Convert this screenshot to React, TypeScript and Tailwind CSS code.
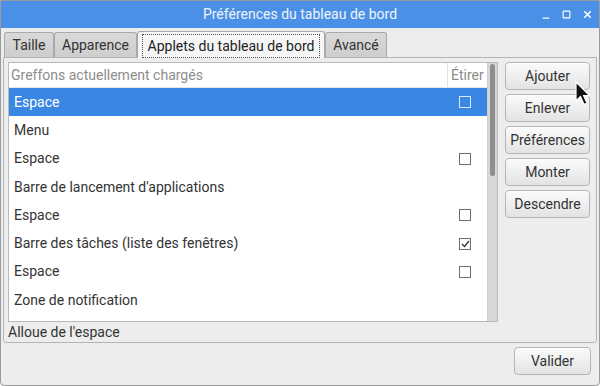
import { Minus, Square, X } from 'lucide-react'

const rows: { label: string; box?: 'off' | 'on' }[] = [
  { label: 'Espace', box: 'off' },
  { label: 'Menu' },
  { label: 'Espace', box: 'off' },
  { label: "Barre de lancement d'applications" },
  { label: 'Espace', box: 'off' },
  { label: 'Barre des tâches (liste des fenêtres)', box: 'on' },
  { label: 'Espace', box: 'off' },
  { label: 'Zone de notification' },
]

const sideButtons = ['Ajouter', 'Enlever', 'Préférences', 'Monter', 'Descendre']

export default function App() {
  return (
    <div
      className="w-[600px] h-[386px] flex flex-col bg-[#ededed] border border-[#9a9a9a] rounded-b-[4px] overflow-hidden text-[#333] relative"
      style={{ fontFamily: 'Roboto, "Liberation Sans", sans-serif' }}
    >
      {/* Title bar */}
      <div className="h-[27px] shrink-0 bg-[#4a90e6] flex items-center relative">
        <span className="flex-1 text-center text-[14px] text-[#eef4fd]">Préférences du tableau de bord</span>
        <div className="absolute right-[6px] top-0 h-full flex items-center gap-[11px] text-white">
          <Minus size={10} strokeWidth={3} className="mt-[6px]" />
          <Square size={9} strokeWidth={3} />
          <X size={11} strokeWidth={3.5} />
        </div>
      </div>

      {/* Tabs */}
      <div className="h-[29px] shrink-0 flex items-end px-[3px]">
        <Tab label="Taille" w="w-[50px]" />
        <Tab label="Apparence" w="w-[83px]" />
        <div className="w-[188px] h-[27px] mb-[-1px] relative z-10 bg-[#f6f6f6] border border-b-0 border-[#a9a9a9] rounded-t-[3px] flex items-start justify-center px-[4px] pt-[2px]">
          <span className="border border-dotted border-[#555] leading-[22px] text-[14px] text-[#222] w-full text-center">
            Applets du tableau de bord
          </span>
        </div>
        <Tab label="Avancé" w="w-[62px]" />
      </div>

      {/* Notebook page */}
      <div className="mx-[2px] h-[286px] shrink-0 border border-[#b4b4b4] rounded-b-[3px] bg-[#ededed] flex flex-col px-[4px] pt-[4px]">
        <div className="flex gap-[7px]">
          {/* List frame */}
          <div className="w-[490px] h-[260px] border border-[#b9b9b9] bg-white flex overflow-hidden">
            <div className="flex-1 flex flex-col">
              <div className="h-[25px] shrink-0 flex items-center text-[14px] text-[#8c8c8c] border-b border-[#e6e6e6]">
                <span className="flex-1 pl-[2px]">Greffons actuellement chargés</span>
                <span className="w-[40px] h-full flex items-center border-l border-[#e3e3e3] pl-[3px]">Étirer</span>
              </div>
              {rows.map((r, i) => (
                <div
                  key={i}
                  className={`h-[28.3px] shrink-0 flex items-center text-[14px] ${i === 0 ? 'bg-[#3a87e3] text-white' : 'text-[#333]'}`}
                >
                  <span className="flex-1 pl-[5px]">{r.label}</span>
                  <span className="w-[40px] flex justify-center pr-[4px]">
                    {r.box && <Check on={r.box === 'on'} sel={i === 0} />}
                  </span>
                </div>
              ))}
            </div>
            {/* Scrollbar */}
            <div className="w-[10px] bg-[#d8d8d8] border-l border-[#cfcfcf] flex justify-center pt-[1px]">
              <div className="w-[5px] h-[112px] rounded-full bg-[#8e8e8e]" />
            </div>
          </div>

          {/* Side buttons */}
          <div className="flex flex-col gap-[4px]">
            {sideButtons.map((b) => (
              <Btn key={b} label={b} w="w-[85px]" />
            ))}
          </div>
        </div>
        <div className="text-[14px] text-[#333] leading-[20px]">Alloue de l'espace</div>
      </div>

      {/* Footer */}
      <div className="flex-1 flex justify-end items-start pt-[4px] pr-[8px]">
        <Btn label="Valider" w="w-[77px]" />
      </div>

      {/* Cursor */}
      <svg className="absolute left-[574px] top-[80px]" width="16" height="26" viewBox="0 0 16 26">
        <path d="M1 1 L1 20 L5.5 15.5 L9 23.5 L12 22 L8.5 14.5 L14.5 14.5 Z" fill="#111" stroke="#fff" strokeWidth="1.2" strokeLinejoin="round" />
      </svg>
    </div>
  )
}

function Tab({ label, w }: { label: string; w: string }) {
  return (
    <div className={`${w} h-[25px] bg-gradient-to-b from-[#d9d9d9] to-[#cdcdcd] border border-b-0 border-[#a9a9a9] rounded-t-[3px] flex items-center justify-center text-[14px] text-[#333]`}>
      {label}
    </div>
  )
}

function Btn({ label, w }: { label: string; w: string }) {
  return (
    <div className={`${w} h-[28px] rounded-[4px] border border-[#b5b5b5] bg-gradient-to-b from-[#fbfbfb] to-[#e3e3e3] shadow-[inset_0_1px_0_#fff] flex items-center justify-center text-[14px] text-[#333]`}>
      {label}
    </div>
  )
}

function Check({ on, sel }: { on: boolean; sel: boolean }) {
  return (
    <span className={`w-[12px] h-[12px] border ${sel ? 'border-[#dbe9fb] bg-[#3a87e3]' : 'border-[#6e6e6e] bg-white'} flex items-center justify-center`}>
      {on && (
        <svg width="9" height="8" viewBox="0 0 9 8">
          <path d="M1 4 L3.5 6.5 L8 1" fill="none" stroke="#333" strokeWidth="1.3" />
        </svg>
      )}
    </span>
  )
}
